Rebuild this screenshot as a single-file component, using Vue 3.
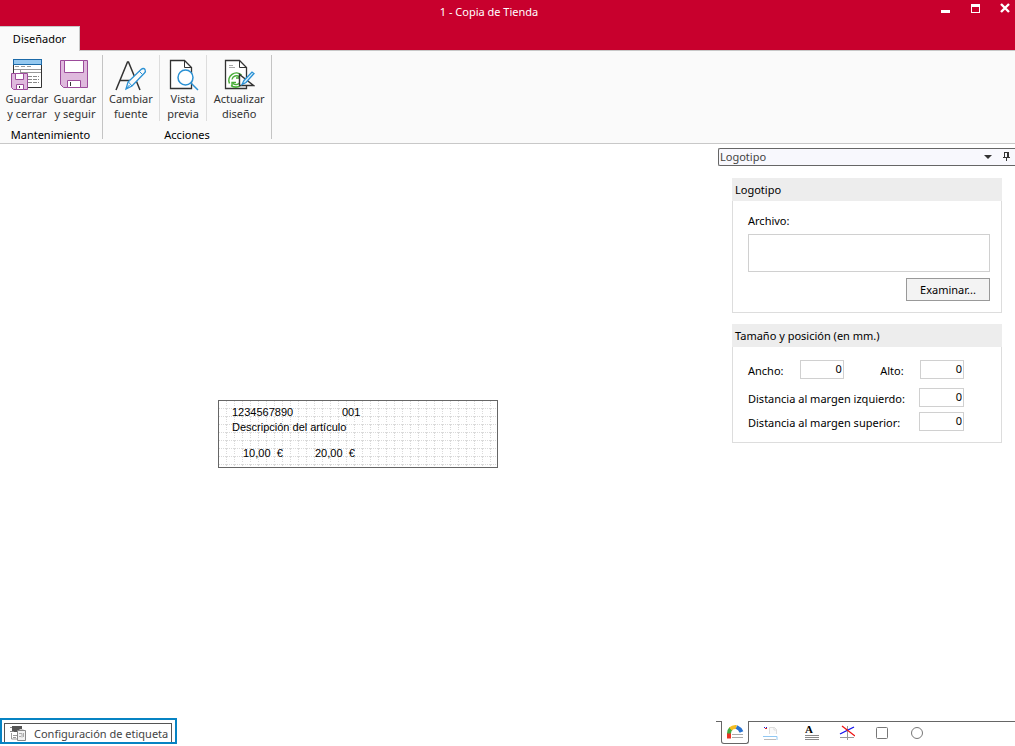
<script setup>
import { ref } from 'vue'

const archivo = ref('')
const ancho = ref('0')
const alto = ref('0')
const izquierdo = ref('0')
const superior = ref('0')
</script>

<template>
  <div class="window">
    <header class="titlebar">
      <h1 class="title">1 - Copia de Tienda</h1>
      <div class="controls">
        <button type="button" aria-label="Minimizar">
          <svg width="11" height="11" viewBox="0 0 11 11" shape-rendering="crispEdges"><path d="M1 7h9v3H1z" fill="#fff" /></svg>
        </button>
        <button type="button" aria-label="Maximizar">
          <svg width="11" height="11" viewBox="0 0 11 11" shape-rendering="crispEdges"><path d="M1 1h9v9H1zM2 4v5h7V4z" fill="#fff" fill-rule="evenodd" /></svg>
        </button>
        <button type="button" aria-label="Cerrar">
          <svg width="11" height="11" viewBox="0 0 11 11"><path d="M1 1l8 8M9 1l-8 8" stroke="#fff" stroke-width="2.400" /></svg>
        </button>
      </div>
      <nav class="tabs"><button type="button" class="tab">Diseñador</button></nav>
    </header>

    <section class="ribbon">
      <div class="group maintenance">
        <div class="tools">
          <button type="button" class="tool">
            <svg width="32" height="33" viewBox="0 0 32 33">
              <path d="M2.500 1.500h28v28h-28z" fill="#fff" stroke="#333" />
              <path d="M2 1h29v6H2z" fill="#94c8ef" />
              <path d="M2 1.500h29M2 6.500h29M2.500 1v6M30.500 1v6" fill="none" stroke="#1c6aa8" />
              <path d="M4 8.500h4M10 8.500h4M16 8.500h4M3 11.500h27M9.500 11v4M9 14.500h21" stroke="#999" fill="none" />
              <path d="M17 18.500h11M17 21.500h11M17 24.500h11" stroke="#888" stroke-dasharray="4 1" />
              <path d="M.5 15.500h16v16h-14l-2-2z" fill="#dfb9dd" stroke="#9c4b9b" />
              <path d="M4.500 15.500h8v6h-8zM5.500 26.500h7v5h-7z" fill="#fff" stroke="#9c4b9b" />
              <path d="M8.500 28v2" stroke="#333" />
            </svg>
            <span>Guardar<br />y cerrar</span>
          </button>
          <button type="button" class="tool">
            <svg width="32" height="33" viewBox="0 0 32 33">
              <path d="M1.500 2.500h27v27h-24l-3-3z" fill="#dfb9dd" stroke="#9c4b9b" />
              <path d="M5.500 2.500h19v12h-19zM8.500 22.500h13v7h-13z" fill="#fff" stroke="#9c4b9b" />
              <path d="M11.500 24v4" stroke="#333" />
            </svg>
            <span>Guardar<br />y seguir</span>
          </button>
        </div>
        <div class="caption">Mantenimiento</div>
      </div>
      <div class="group actions">
        <div class="tools">
          <button type="button" class="tool">
            <svg width="32" height="33" viewBox="0 0 32 33">
              <path d="M1 32L12.500 4h1L25 32M5 22.500h17" fill="none" stroke="#333" stroke-width="1.500" />
              <path d="M11 31l2-7L26 11.500q2.500-2 4 0 1 2-.5 3.500L17 28z" fill="#fafafa" stroke="#2b91d4" stroke-width="1.300" />
              <path d="M13.500 24l3.500 4M24 13l3.500 3.500M11 31l3.500-4" stroke="#2b91d4" />
            </svg>
            <span>Cambiar<br />fuente</span>
          </button>
          <button type="button" class="tool">
            <svg width="32" height="33" viewBox="0 0 32 33">
              <path d="M3.500 2.500h14l7 7v21h-21z" fill="#fff" stroke="#333" stroke-width="1.300" />
              <path d="M17.500 2.500v7h7" fill="none" stroke="#333" />
              <circle cx="18.500" cy="19.500" r="7.500" fill="#fff" stroke="#2b91d4" stroke-width="1.500" />
              <path d="M24 25l7 7" stroke="#2b91d4" stroke-width="1.500" />
            </svg>
            <span>Vista<br />previa</span>
          </button>
          <button type="button" class="tool">
            <svg width="32" height="33" viewBox="0 0 32 33">
              <path d="M2.500 2.500h14l7 7v21h-21z" fill="#fff" stroke="#333" stroke-width="1.300" />
              <path d="M16.500 2.500v7h7" fill="none" stroke="#333" />
              <path d="M6 7.500h4M6 9.500h6" stroke="#aaa" />
              <path d="M6.500 25.500A7.500 7.500 0 0 1 18.500 17M18 27a7.500 7.500 0 0 1-10 .5" fill="none" stroke="#49ae38" stroke-width="1.600" />
              <path d="M9 21.500a4.500 4.500 0 0 1 7.500-2.500M17 24a4.500 4.500 0 0 1-7 1.500M9 28.500v-4h4M13 20h4v-4" fill="none" stroke="#49ae38" stroke-width="1.400" />
              <path d="M16.500 16.500v11h14z" fill="#fafafa" stroke="#333" stroke-width="1.400" />
              <path d="M19 26.500l2-4 8-8.500 2 1.500-8 9z" fill="#d9effc" stroke="#2b91d4" stroke-width="1.300" />
            </svg>
            <span>Actualizar<br />diseño</span>
          </button>
        </div>
        <div class="caption">Acciones</div>
      </div>
    </section>

    <main class="body">
      <section class="workspace">
        <div class="canvas-area">
          <div class="label-canvas">
            <svg class="grid" width="100%" height="100%" shape-rendering="crispEdges">
              <defs>
                <pattern id="dots" width="8" height="8" patternUnits="userSpaceOnUse">
                  <path d="M0 7h1v1H0zM2 7h1v1H2zM4 7h1v1H4zM6 7h2v1H6zM7 0h1v1H7zM7 2h1v1H7zM7 4h1v1H7z" fill="#dadada" />
                </pattern>
              </defs>
              <rect width="100%" height="100%" fill="url(#dots)" />
            </svg>
            <span class="item code">1234567890</span>
            <span class="item number">001</span>
            <span class="item description">Descripción del artículo</span>
            <span class="item price">10,00&nbsp; €</span>
            <span class="item total">20,00&nbsp; €</span>
          </div>
        </div>
        <div class="highlight">
          <button type="button" class="config">
            <svg width="18" height="17" viewBox="0 0 18 17">
              <path d="M2 1h10v6H2z" fill="#555" />
              <path d="M0 2.500h2M0 6.500h4" stroke="#888" />
              <path d="M1.500 8v6h6M3 10.500h4M3 12.500h3" fill="none" stroke="#999" />
              <path d="M7.500 5.500h8v10h-8z" fill="#f2f2f2" stroke="#888" />
              <path d="M9.500 4.500h4" stroke="#ccc" />
              <path d="M9 8.500h3v4M13.500 8v4M9 11.500h2" fill="none" stroke="#aaa" />
            </svg>
            <span>Configuración de etiqueta</span>
          </button>
        </div>
      </section>

      <aside class="panel">
        <div class="panel-head">
          <span>Logotipo</span>
          <button type="button" aria-label="Opciones del panel">
            <svg width="10" height="10" viewBox="0 0 10 10"><path d="M0 3h8L4 7z" fill="#333" /></svg>
          </button>
          <button type="button" aria-label="Fijar panel">
            <svg width="10" height="10" viewBox="0 0 10 10" shape-rendering="crispEdges"><path d="M2 0h5v1H2zM2 0h1v6H2zM5 0h2v6H5zM1 5h7v1H1zM4 6h1v3H4z" fill="#333" /></svg>
          </button>
        </div>

        <div class="cards">
          <section class="card">
            <h2>Logotipo</h2>
            <div class="file-body">
              <label for="archivo">Archivo:</label>
              <textarea id="archivo" v-model="archivo"></textarea>
              <button type="button" class="browse">Examinar...</button>
            </div>
          </section>
          <section class="card">
            <h2>Tamaño y posición (en mm.)</h2>
            <div class="size-body">
              <div class="size-row">
                <label for="ancho">Ancho:</label>
                <input id="ancho" v-model="ancho" class="short" type="text" />
                <label for="alto" class="alto">Alto:</label>
                <input id="alto" v-model="alto" class="short" type="text" />
              </div>
              <div class="size-row left-margin">
                <label for="izquierdo">Distancia al margen izquierdo:</label>
                <input id="izquierdo" v-model="izquierdo" type="text" />
              </div>
              <div class="size-row top-margin">
                <label for="superior">Distancia al margen superior:</label>
                <input id="superior" v-model="superior" type="text" />
              </div>
            </div>
          </section>
        </div>

        <nav class="object-tabs">
          <button type="button" class="active" aria-label="Logotipo">
            <svg width="18" height="16" viewBox="0 0 18 16">
              <path d="M3 14.500V9" stroke="#e93425" stroke-width="4" />
              <path d="M3 9.500q0-3 2-5" fill="none" stroke="#43ad42" stroke-width="4" />
              <path d="M4.500 5q2.500-2.500 6-2" fill="none" stroke="#f3bd24" stroke-width="4" />
              <path d="M10.500 3q3.500 1.500 5 5" fill="none" stroke="#2872d1" stroke-width="4" />
              <path d="M6 10.500h11M6 13.500h11" stroke="#aaa" />
            </svg>
          </button>
          <button type="button" aria-label="Datos">
            <svg width="18" height="16" viewBox="0 0 18 16">
              <path d="M8.500 9V2.500h5l2 2V9M13 2v3h3" fill="#fafafa" stroke="#ddd" />
              <path d="M3 2.500h1M5 2.500h1" stroke="#22c" /><path d="M4 3.500h2" stroke="#d22" />
              <path d="M2 11.500h14V15" fill="none" stroke="#91c8f3" />
              <path d="M3 14.500h12" fill="none" stroke="#bbb" />
            </svg>
          </button>
          <button type="button" class="text-tab" aria-label="Texto">
            <b>A</b>
            <svg width="14" height="5" viewBox="0 0 14 5"><path d="M0 .5h14M0 2.500h14M0 4.500h14" stroke="#888" /></svg>
          </button>
          <button type="button" aria-label="Línea">
            <svg width="16" height="16" viewBox="0 0 16 16">
              <path d="M8.500 1v14M1 12.500h14" stroke="#999" />
              <path d="M1 9l14-7" stroke="#11e" stroke-width="1.300" />
              <path d="M3 1l13 10" stroke="#e11" stroke-width="1.300" />
            </svg>
          </button>
          <button type="button" aria-label="Rectángulo">
            <svg width="14" height="14" viewBox="0 0 14 14"><rect x="1.500" y="1.500" width="11" height="11" rx="1" fill="none" stroke="#777" /></svg>
          </button>
          <button type="button" aria-label="Elipse">
            <svg width="14" height="14" viewBox="0 0 14 14"><circle cx="7" cy="7" r="5.500" fill="none" stroke="#777" /></svg>
          </button>
        </nav>
      </aside>
    </main>
  </div>
</template>

<style>
body {
  background: #fff;
}
</style>

<style scoped>
* {
  box-sizing: border-box;
}
.window {
  display: flex;
  flex-direction: column;
  min-height: 100vh;
  background: #fff;
  color: #000;
  font: 11px/15px "Noto Sans", "Open Sans", sans-serif;
}
button,
input,
textarea {
  margin: 0;
  padding: 0;
  border: 0;
  border-radius: 0;
  background: none;
  color: inherit;
  font: inherit;
}
svg {
  display: block;
  flex: none;
}
.titlebar {
  display: grid;
  grid-template-columns: 1fr auto 1fr;
  grid-template-rows: 26px 24px;
  background: #c8002d;
  color: #fff;
}
.title {
  grid-column: 2;
  margin: 0;
  padding: 4px 37px 0 0;
  font-size: 11px;
  font-weight: 400;
  line-height: 15px;
}
.controls {
  grid-column: 3;
  display: flex;
  justify-content: flex-end;
  align-items: flex-start;
  gap: 19px;
  padding: 3px 4px 0 0;
}
.tabs {
  position: relative;
  grid-column: 1;
  display: flex;
}
.tab {
  width: 80px;
  margin-bottom: -1px;
  padding-bottom: 1px;
  border-top: 1px solid #c8c8c8;
  border-right: 1px solid #c8c8c8;
  background: #fafafa;
  color: #000;
}
.ribbon {
  display: flex;
  height: 94px;
  padding: 4px 0;
  border-top: 1px solid #c8c8c8;
  border-bottom: 1px solid #c8c8c8;
  background: #fafafa;
}
.group {
  display: flex;
  flex-direction: column;
  justify-content: space-between;
  border-right: 1px solid #c4c4c4;
}
.maintenance {
  width: 103px;
  padding-left: 3px;
}
.actions {
  width: 169px;
}
.tools {
  display: flex;
}
.tool {
  display: flex;
  flex-direction: column;
  align-items: center;
  width: 48px;
  height: 66px;
  padding-top: 3px;
  color: #333;
}
.tool span {
  white-space: nowrap;
}
.actions .tool {
  border-right: 1px solid #ddd;
}
.actions .tool:nth-child(1) {
  width: 57px;
}
.actions .tool:nth-child(3) {
  width: 64px;
  border: 0;
}
.caption {
  line-height: 9px;
  text-align: center;
}
.maintenance .caption {
  padding-right: 4px;
}
.body {
  display: flex;
  flex: 1;
}
.workspace {
  display: flex;
  flex: 1;
  flex-direction: column;
}
.canvas-area {
  display: flex;
  flex: 1;
  justify-content: center;
  align-items: center;
  padding-top: 6px;
}
.label-canvas {
  position: relative;
  width: 280px;
  height: 68px;
  border: 1px solid #666;
  background: #fff;
  font: 11px/13px "Liberation Sans", Arial, sans-serif;
}
.item {
  position: absolute;
  white-space: nowrap;
}
.code {
  top: 5px;
  left: 13px;
}
.number {
  top: 5px;
  left: 123px;
}
.description {
  top: 20px;
  left: 13px;
}
.price {
  top: 46px;
  left: 24px;
}
.total {
  top: 46px;
  left: 96px;
}
.highlight {
  align-self: flex-start;
  width: 177px;
  height: 26px;
  margin-bottom: 2px;
  padding: 3px 2px 0;
  border: 2px solid #0783c3;
}
.config {
  display: flex;
  align-items: center;
  width: 168px;
  height: 19px;
  gap: 6px;
  padding: 1px 0 0 5px;
  border: 1px solid #555;
  border-bottom: 0;
  color: #444;
  white-space: nowrap;
}
.panel {
  display: flex;
  flex: none;
  flex-direction: column;
  width: 299px;
  padding-top: 4px;
}
.panel-head {
  display: flex;
  align-items: center;
  height: 18px;
  margin-left: 2px;
  padding: 0 3px 0 1px;
  border: 1px solid #666;
  border-right: 0;
  border-radius: 2px 0 0 2px;
  background: #f8f8fd;
  color: #444;
  gap: 8px;
}
.panel-head span {
  flex: 1;
  padding-bottom: 1px;
}
.cards {
  display: flex;
  flex: 1;
  flex-direction: column;
  gap: 11px;
  padding: 12px 13px 0 16px;
}
.card {
  border: 1px solid #ddd;
  border-top: 0;
}
h2 {
  height: 23px;
  margin: 0 -1px;
  padding: 4px 3px;
  background: #ededed;
  font-size: 11px;
  font-weight: 400;
  line-height: 15px;
}
.file-body {
  display: flex;
  flex-direction: column;
  padding: 12px 11px 11px 15px;
}
textarea {
  height: 38px;
  margin-top: 6px;
  border: 1px solid #d0d0d0;
  resize: none;
}
.browse {
  align-self: flex-end;
  width: 84px;
  height: 23px;
  margin-top: 6px;
  border: 1px solid #999;
  background: #f3f3f3;
}
.size-body {
  padding: 13px 37px 11px 15px;
}
.size-row {
  display: flex;
  justify-content: space-between;
}
.size-row label {
  padding-top: 3px;
}
.size-row .alto {
  margin-left: 20px;
}
.left-margin {
  margin-top: 9px;
}
.top-margin {
  margin-top: 5px;
}
input {
  width: 45px;
  height: 19px;
  padding: 0 1px 2px 0;
  border: 1px solid #d0d0d0;
  text-align: right;
}
.short {
  width: 44px;
}
.object-tabs {
  display: flex;
  height: 25px;
  padding-left: 5px;
  border-top: 1px solid #666;
  gap: 7px;
}
.object-tabs button {
  display: flex;
  flex-direction: column;
  align-items: center;
  justify-content: center;
  width: 28px;
  height: 22px;
}
.object-tabs .active {
  margin-top: -1px;
  height: 23px;
  border: 1px solid #666;
  border-top: 0;
  border-radius: 0 0 3px 3px;
  background: #fff;
}
.object-tabs .text-tab {
  margin-left: 7px;
  padding-bottom: 2px;
}
.text-tab b {
  align-self: flex-start;
  padding-left: 7px;
  font: bold 11px/11px "Liberation Serif", serif;
}
</style>
